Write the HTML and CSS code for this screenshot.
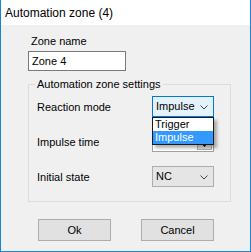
FILE: index.html
```html
<!DOCTYPE html>
<html>
<head>
<meta charset="utf-8">
<link rel="stylesheet" href="styles.css">
</head>
<body>
<div class="window">
  <div class="titlebar">Automation zone (4)</div>
  <div class="content">
    <div class="field-label">Zone name</div>
    <div class="textbox">Zone 4</div>
    <div class="group">
      <div class="legend">Automation zone settings</div>
      <div class="rows">
        <div class="row">
          <span class="row-label">Reaction mode</span>
          <div class="combo combo-focus">
            <span class="combo-text">Impulse</span>
            <svg class="chev" width="8" height="5" viewBox="0 0 8 5"><polyline points="0.5,0.5 4,4 7.5,0.5" fill="none" stroke="#444" stroke-width="1"/></svg>
            <div class="droplist">
              <div class="item">Trigger</div>
              <div class="item item-sel">Impulse</div>
            </div>
          </div>
        </div>
        <div class="row">
          <span class="row-label">Impulse time</span>
          <div class="combo combo-classic">
            <span class="combo-text"></span>
            <span class="dropbtn"><svg width="7" height="4" viewBox="0 0 7 4"><polygon points="0,0 7,0 3.5,4" fill="#000"/></svg></span>
          </div>
        </div>
        <div class="row">
          <span class="row-label">Initial state</span>
          <div class="combo">
            <span class="combo-text">NC</span>
            <svg class="chev" width="8" height="5" viewBox="0 0 8 5"><polyline points="0.5,0.5 4,4 7.5,0.5" fill="none" stroke="#444" stroke-width="1"/></svg>
          </div>
        </div>
      </div>
    </div>
    <div class="buttons">
      <div class="btn">Ok</div>
      <div class="btn">Cancel</div>
    </div>
  </div>
</div>
</body>
</html>
```
FILE: styles.css
```css
html, body {
  margin: 0;
  padding: 0;
  background: #ffffff;
}
.window {
  width: 251px;
  height: 252px;
  box-sizing: border-box;
  border: 1px solid #1883d7;
  border-top: none;
  display: flex;
  flex-direction: column;
  font-family: "Liberation Sans", Arial, sans-serif;
  font-size: 11px;
  color: #000;
}
.titlebar {
  height: 25px;
  line-height: 26px;
  padding-left: 4px;
  font-size: 12px;
  background: #ffffff;
  flex: none;
}
.content {
  flex: 1;
  background: #f0f0f0;
  padding: 10px 0 0 27px;
}
.field-label {
  line-height: 13px;
  padding-left: 3px;
}
.textbox {
  margin-top: 3px;
  width: 98px;
  height: 20px;
  box-sizing: border-box;
  border: 1px solid #7a7a7a;
  background: #fff;
  padding-left: 3px;
  line-height: 18px;
}
.group {
  margin-top: 13px;
  width: 203px;
  box-sizing: border-box;
  border: 1px solid #dcdcdc;
  padding: 0 0 14px 7px;
}
.legend {
  display: block;
  width: max-content;
  margin-top: -7px;
  margin-left: -1px;
  padding: 0 2px;
  background: #f0f0f0;
  line-height: 13px;
}
.rows {
  margin-top: 5px;
  display: flex;
  flex-direction: column;
  gap: 14px;
}
.row {
  display: flex;
  align-items: center;
  height: 21px;
}
.row-label {
  width: 116px;
  padding-left: 1px;
  box-sizing: border-box;
}
.combo {
  position: relative;
  width: 62px;
  height: 21px;
  box-sizing: border-box;
  border: 1px solid #adadad;
  background: #e5e5e5;
  display: flex;
  align-items: center;
  justify-content: space-between;
  padding: 0 5px 0 3px;
}
.combo-text {
  line-height: 13px;
}
.combo-focus {
  border-color: #0078d7;
  background: #e5f1fb;
}
.chev {
  display: block;
  margin-top: 1px;
}
.combo-classic {
  background: #fff;
  border-color: #a0a0a0;
  padding: 0 0 0 3px;
}
.dropbtn {
  width: 15px;
  height: 17px;
  margin-right: 1px;
  box-sizing: border-box;
  border: 1px solid #adadad;
  background: #e1e1e1;
  display: flex;
  align-items: flex-end;
  justify-content: center;
  padding-bottom: 2px;
}
.dropbtn svg {
  display: block;
}
.droplist {
  position: absolute;
  top: 20px;
  left: -1px;
  width: 62px;
  box-sizing: border-box;
  border: 1px solid #1a1a1a;
  background: #fff;
  box-shadow: 3px 3px 3px rgba(0, 0, 0, 0.3);
  z-index: 5;
}
.item {
  height: 13px;
  line-height: 13px;
  padding-left: 2px;
}
.item-sel {
  background: #3399ff;
  color: #fff;
}
.buttons {
  margin-top: 17px;
  padding-left: 10px;
  display: flex;
  gap: 30px;
}
.btn {
  width: 73px;
  height: 22px;
  box-sizing: border-box;
  border: 1px solid #adadad;
  background: #e1e1e1;
  text-align: center;
  line-height: 20px;
}
```
